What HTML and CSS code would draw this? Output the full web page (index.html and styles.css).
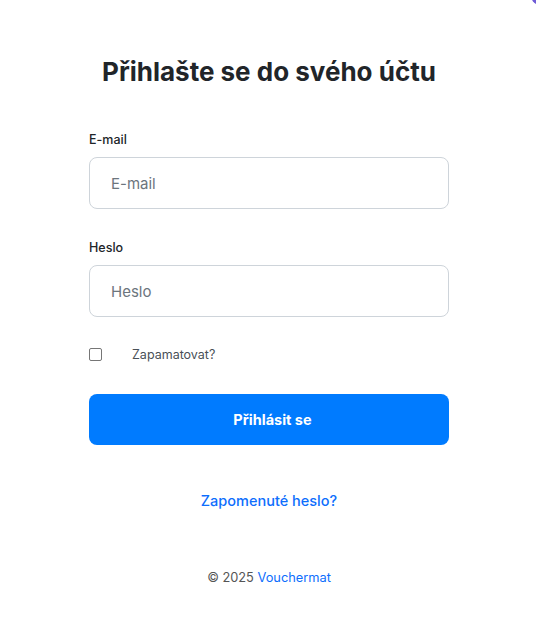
FILE: index.html
```html
<!DOCTYPE html>
<html lang="cs">
<head>
<meta charset="utf-8">
<title>Přihlášení</title>
<link rel="stylesheet" href="styles.css">
</head>
<body>
<div class="corner"></div>
<main class="wrap">
  <h1 class="title">Přihlašte se do svého účtu</h1>
  <form class="form">
    <div class="field">
      <label class="label" for="email">E-mail</label>
      <input class="input" id="email" type="email" placeholder="E-mail">
    </div>
    <div class="field field-last">
      <label class="label" for="pass">Heslo</label>
      <input class="input" id="pass" type="password" placeholder="Heslo">
    </div>
    <label class="remember">
      <span class="check"></span>
      <span class="remember-text">Zapamatovat?</span>
    </label>
    <button class="btn" type="button">Přihlásit se</button>
  </form>
  <a class="forgot" href="#">Zapomenuté heslo?</a>
  <footer class="footer">© 2025 <a class="brand" href="#">Vouchermat</a></footer>
</main>
</body>
</html>
```
FILE: styles.css
```css
* { box-sizing: border-box; }
html, body { margin: 0; padding: 0; background: #fff; }
body {
  font-family: Inter, "Noto Sans", sans-serif;
  color: #212529;
  position: relative;
  min-height: 639px;
  overflow: hidden;
}
.corner {
  position: absolute;
  top: -14px;
  right: -14px;
  width: 19px;
  height: 19px;
  border-radius: 50%;
  background: #6f5bd6;
}
.wrap {
  width: 360px;
  margin: 0 auto;
  padding-top: 55px;
  display: flex;
  flex-direction: column;
  position: relative;
  left: 1px;
}
.title {
  margin: 0;
  font-size: 26px;
  font-weight: 700;
  line-height: 34px;
  text-align: center;
  color: #212529;
}
.form {
  margin-top: 43px;
  display: flex;
  flex-direction: column;
}
.field {
  display: flex;
  flex-direction: column;
  margin-bottom: 31px;
}
.field-last { margin-bottom: 30px; }
.label {
  font-size: 12.5px;
  font-weight: 500;
  line-height: 16px;
  margin-bottom: 9px;
  color: #212529;
}
.input {
  height: 52px;
  border: 1px solid #ced4da;
  border-radius: 8px;
  padding: 0 21px;
  font-family: inherit;
  font-size: 15px;
  color: #212529;
  background: #fff;
  outline: none;
}
.input::placeholder { color: #6c757d; }
.remember {
  display: flex;
  align-items: center;
  height: 16px;
  margin-top: -1px;
}
.check {
  width: 13px;
  height: 13px;
  border: 1px solid #767676;
  border-radius: 2px;
  background: #fff;
}
.remember-text {
  margin-left: 30px;
  font-size: 12.5px;
  color: #495057;
}
.btn {
  margin-top: 32px;
  height: 51px;
  border: 0;
  border-radius: 8px;
  padding: 0 0 0 7px;
  background: #007bff;
  color: #fff;
  font-family: inherit;
  font-size: 14.5px;
  font-weight: 700;
}
.forgot {
  margin-top: 46px;
  text-align: center;
  font-size: 14.5px;
  font-weight: 500;
  color: #0d6efd;
  text-decoration: none;
  line-height: 20px;
}
.footer {
  margin-top: 58px;
  text-align: center;
  font-size: 12.8px;
  color: #555;
  line-height: 18px;
}
.brand { color: #0d6efd; text-decoration: none; }
```
